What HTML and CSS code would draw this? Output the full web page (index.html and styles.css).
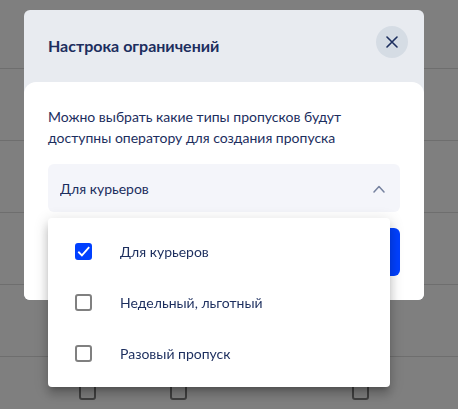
FILE: index.html
```
<!DOCTYPE html>
<html lang="ru">
<head>
  <meta charset="UTF-8">
  <meta name="viewport" content="width=device-width, initial-scale=1">
  <title>Настрока ограничений</title>
  <link rel="stylesheet" href="styles.css">
</head>
<body>
<table class="passes" aria-hidden="true">
  <colgroup>
    <col class="col-edge">
    <col class="col-check">
    <col class="col-check">
    <col class="col-check">
    <col class="col-check">
    <col>
  </colgroup>
  <tbody>
    <tr class="first"><td colspan="6"></td></tr>
    <tr><td colspan="6"></td></tr>
    <tr><td colspan="6"></td></tr>
    <tr><td colspan="6"></td></tr>
    <tr><td colspan="6"></td></tr>
    <tr>
      <td></td>
      <td><input type="checkbox" class="check" tabindex="-1"></td>
      <td><input type="checkbox" class="check" tabindex="-1"></td>
      <td></td>
      <td><input type="checkbox" class="check" tabindex="-1"></td>
      <td></td>
    </tr>
  </tbody>
</table>

<div class="backdrop">
  <div class="modal" role="dialog" aria-modal="true" aria-labelledby="modal-title">
    <header class="modal-header">
      <h2 id="modal-title">Настрока ограничений</h2>
      <button type="button" class="close" aria-label="Закрыть">
        <svg width="12" height="12" viewBox="0 0 12 12" fill="none" stroke="currentColor" stroke-width="1.6" stroke-linecap="round">
          <path d="M1 1l10 10M11 1L1 11" />
        </svg>
      </button>
    </header>

    <form class="modal-body">
      <label class="description" for="pass-type">Можно выбрать какие типы пропусков будут доступны оператору для создания пропуска</label>

      <div class="select">
        <select id="pass-type">
          <option>Для курьеров</option>
        </select>
        <svg class="chevron" width="12" height="8" viewBox="0 0 12 8" fill="none" stroke="currentColor" stroke-width="1.5" stroke-linecap="round" stroke-linejoin="round">
          <path d="M1 7l5-5.500 5 5.500" />
        </svg>

        <div class="menu">
          <label class="option"><input type="checkbox" class="check" checked>Для курьеров</label>
          <label class="option"><input type="checkbox" class="check">Недельный, льготный</label>
          <label class="option"><input type="checkbox" class="check">Разовый пропуск</label>
        </div>
      </div>

      <button type="submit" class="submit" aria-label="Сохранить"></button>
    </form>
  </div>
</div>
</body>
</html>
```
FILE: styles.css
```
* {
  box-sizing: border-box;
}

body {
  height: 100vh;
  margin: 0;
  overflow: hidden;

  font-family: Lato, 'Liberation Sans', sans-serif;
  font-size: 14px;
  line-height: 21px;
  color: #1c2e5e;
  background: #ffffff;
}

.passes {
  width: 100%;
  table-layout: fixed;
  border-collapse: separate;
  border-spacing: 0;
}

.passes td {
  height: 72px;
  padding: 0;
  border-bottom: 1px solid #dcdcdc;
  text-align: center;
  vertical-align: middle;
}

.passes .first td {
  height: 69px;
}

.passes .check {
  margin-bottom: 4px;
  vertical-align: middle;
}

.col-edge {
  width: 42px;
}

.col-check {
  width: 91px;
}

.check {
  flex: none;
  width: 17px;
  height: 17px;
  margin: 0;
  appearance: none;
  border: 2px solid #808080;
  border-radius: 3px;
}

.check:checked {
  border-color: #0040ff;
  background: #0040ff;
}

.backdrop {
  position: fixed;
  inset: 0;
  padding: 10px 34px 0 24px;
  background: rgba(0, 0, 0, 0.5);
}

.modal {
  border-radius: 6px;
  background: #e8ebf0;
}

.modal-header {
  display: flex;
  align-items: center;
  justify-content: space-between;
  height: 72px;
  padding: 0 16px 0 24px;
}

.modal-header h2 {
  margin: 0;
  padding-bottom: 2px;
  font-size: 16px;
  font-weight: 700;
}

.close {
  display: flex;
  align-items: center;
  justify-content: center;
  width: 32px;
  height: 32px;
  margin-bottom: 8px;
  padding: 0;
  border: 0;
  border-radius: 50%;
  color: #1c2e5e;
  background: #d5dce4;
  cursor: pointer;
}

.modal-body {
  display: flex;
  flex-direction: column;
  gap: 16px;
  padding: 24px;
  border-radius: 12px 12px 6px 6px;
  background: #ffffff;
}

.select {
  position: relative;
}

.select select {
  display: block;
  width: 100%;
  height: 48px;
  padding: 0 40px 0 12px;
  appearance: none;
  border: 0;
  border-radius: 6px;
  font: inherit;
  color: inherit;
  background: #f4f5fa;
}

.chevron {
  position: absolute;
  top: 21px;
  right: 15px;
  color: #76829f;
  pointer-events: none;
}

.menu {
  position: absolute;
  top: 54px;
  left: 0;
  right: 10px;
  padding: 8px 0;
  border-radius: 4px;
  background: #ffffff;
  box-shadow: 0 5px 5px -3px rgba(0, 0, 0, 0.2), 0 8px 10px 1px rgba(0, 0, 0, 0.14), 0 3px 14px 2px rgba(0, 0, 0, 0.12);
}

.option {
  display: flex;
  align-items: center;
  gap: 28px;
  height: 51px;
  padding: 0 27px;
  cursor: pointer;
}

.option .check:checked {
  background: #0040ff url("data:image/svg+xml,%3Csvg xmlns='http://www.w3.org/2000/svg' viewBox='0 0 16 16' fill='none' stroke='white' stroke-width='2'%3E%3Cpath d='M2 8l4 4 8-9'/%3E%3C/svg%3E") center / 14px no-repeat;
}

.submit {
  height: 48px;
  border: 0;
  border-radius: 6px;
  background: #0040ff;
  cursor: pointer;
}
```
